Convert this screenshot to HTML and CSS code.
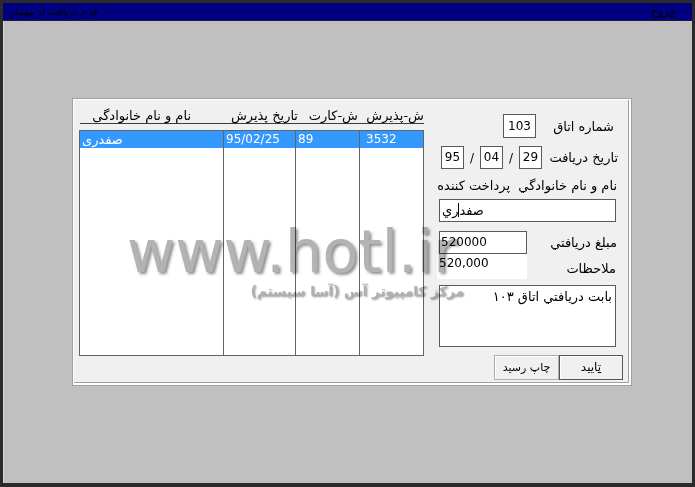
FILE: index.html
```html
<!DOCTYPE html>
<html lang="fa">
<head>
<meta charset="utf-8">
<title>فرم دریافت از مهمان</title>
<link rel="stylesheet" href="styles.css">
</head>
<body>
<div class="window">
  <div class="titlebar">
    <span class="title">فرم دریافت از مهمان</span>
    <span class="exit"><u>خ</u>روج</span>
  </div>
  <div class="client">
    <div class="panel">
      <div class="list">
        <div class="list-head">
          <span class="h h1">نام و نام خانوادگی</span>
          <span class="h h2">تاریخ پذیرش</span>
          <span class="h h3">ش-کارت</span>
          <span class="h h4">ش-پذیرش</span>
        </div>
        <div class="grid">
          <div class="col c1"><div class="cell sel">صفدری</div></div>
          <div class="col c2"><div class="cell sel">95/02/25</div></div>
          <div class="col c3"><div class="cell sel">89</div></div>
          <div class="col c4"><div class="cell sel">3532</div></div>
        </div>
      </div>
      <div class="form">
        <div class="row r-room">
          <div class="box room">103</div>
          <span class="lbl grow">شماره اتاق</span>
        </div>
        <div class="row r-date">
          <div class="box d">95</div>
          <span class="slash s1">/</span>
          <div class="box d">04</div>
          <span class="slash s2">/</span>
          <div class="box d">29</div>
          <span class="lbl grow">تاریخ دریافت</span>
        </div>
        <div class="row r-payer">
          <span class="lbl">نام و نام خانوادگي&nbsp; پرداخت کننده</span>
        </div>
        <div class="box name"><span dir="rtl">صفد<span class="caret"></span>ري</span></div>
        <div class="row r-amount">
          <div class="box amount">520000</div>
          <span class="lbl grow">مبلغ دريافتي</span>
        </div>
        <div class="row r-note">
          <div class="formatted">520,000</div>
          <span class="lbl grow note-lbl">ملاحظات</span>
        </div>
        <div class="box memo">بابت دريافتي اتاق ۱۰۳</div>
        <div class="buttons">
          <div class="btn print">چاپ رسيد</div>
          <div class="btn ok"><u>ت</u>ایید</div>
        </div>
      </div>
    </div>
    <div class="watermark">
      <div class="wm-big">www.hotl.ir</div>
      <div class="wm-small">مرکز کامپیوتر آس (آسا سیستم)</div>
    </div>
  </div>
</div>
</body>
</html>
```
FILE: styles.css
```css
* { box-sizing: border-box; }
html, body { margin: 0; padding: 0; }
body {
  background: #2b2b2b;
  width: 695px;
  height: 487px;
  overflow: hidden;
  font-family: "DejaVu Sans", "Noto Sans", sans-serif;
  font-size: 12px;
  color: #000;
}
.window {
  margin: 3px 3px 0 3px;
  width: 689px;
  height: 480px;
  display: flex;
  flex-direction: column;
}
.titlebar {
  height: 18px;
  background: #000080;
  display: flex;
  justify-content: space-between;
  align-items: center;
  padding: 0 16px 0 5px;
  color: #000;
  border-bottom: 1px solid #1a1a40;
}
.title { font-size: 10px; color: #000; }
.exit { font-size: 11px; color: #000; }
.client {
  position: relative;
  flex: 1;
  background: #c0c0c0;
  border-left: 1px solid #d4d4d4;
  padding: 77px 0 0 68px;
}
.panel {
  width: 560px;
  height: 288px;
  background: #f0f0f0;
  border: 1px solid #a0a0a0;
  box-shadow: inset 1px 1px 0 #ffffff, inset -2px -2px 0 #ffffff, inset -3px -3px 0 #a0a0a0;
  display: flex;
  padding: 0 0 0 6px;
}
.list { width: 345px; }
.list-head {
  height: 25px;
  display: flex;
  align-items: flex-end;
  border-bottom: 1px solid #3c3c3c;
  margin-left: 1px;
}
.h { text-align: right; white-space: nowrap; font-size: 13px; }
.h1 { width: 116px; padding-right: 5px; }
.h2 { width: 104px; padding-right: 2px; }
.h3 { width: 60px; padding-right: 2px; }
.h4 { width: 64px; padding-right: 0; }
.grid {
  margin-top: 6px;
  height: 226px;
  border: 1px solid #646464;
  background: #fff;
  display: grid;
  grid-template-columns: 143px 72px 64px 64px;
}
.col { border-left: 1px solid #646464; }
.c1 { border-left: none; }
.cell {
  height: 17px;
  line-height: 17px;
  white-space: nowrap;
  font-size: 12px;
}
.sel { background: #3399ff; color: #fff; }
.c1 .cell { padding-left: 2px; font-size: 13px; }
.c2 .cell { padding-left: 2px; }
.c3 .cell { padding-left: 2px; }
.c4 .cell { padding-left: 6px; }

.form {
  margin-left: 13px;
  width: 188px;
  padding-top: 15px;
  display: flex;
  flex-direction: column;
}
.row { display: flex; align-items: center; }
.lbl { white-space: nowrap; font-size: 13px; }
.grow { flex: 1; text-align: right; }
.box {
  background: #fff;
  border: 1px solid #5a5a5a;
  font-size: 12px;
}
.r-room { height: 24px; padding-left: 66px; padding-right: 11px; }
.room { width: 33px; height: 24px; line-height: 22px; text-align: center; }
.r-date { height: 23px; margin-top: 8px; padding-left: 4px; padding-right: 7px; }
.d { width: 23px; height: 23px; line-height: 21px; text-align: center; }
.slash { width: 16px; text-align: center; }
.s2 { width: 16px; }
.r-payer { height: 16px; margin-top: 8px; justify-content: flex-end; padding-right: 8px; }
.name {
  margin-top: 6px;
  margin-left: 2px;
  width: 177px;
  height: 23px;
  line-height: 21px;
  text-align: left;
  padding-left: 2px;
  font-size: 13px;
}
.caret {
  display: inline-block;
  width: 1px;
  height: 14px;
  background: #000;
  vertical-align: -2px;
}
.r-amount { margin-top: 9px; height: 23px; padding-left: 2px; padding-right: 8px; }
.amount { width: 88px; height: 23px; line-height: 21px; padding-left: 1px; }
.r-note { height: 25px; align-items: flex-start; padding-right: 9px; }
.formatted {
  width: 90px;
  height: 25px;
  background: #fff;
  padding-left: 2px;
  line-height: 18px;
}
.note-lbl { padding-top: 7px; }
.memo {
  margin-top: 6px;
  margin-left: 2px;
  width: 177px;
  height: 62px;
  text-align: right;
  padding: 3px 3px 0 0;
  font-size: 13px;
  direction: rtl;
}
.buttons { display: flex; margin-top: 8px; margin-left: 57px; }
.btn {
  height: 25px;
  line-height: 23px;
  text-align: center;
  background: #f0f0f0;
  border: 1px solid #adadad;
  box-shadow: inset 1px 1px 0 #fff;
  font-size: 11px;
}
.print { width: 65px; }
.ok { width: 64px; border-color: #555; font-size: 12px; }

.watermark {
  position: absolute;
  left: 0;
  top: 0;
  pointer-events: none;
  mix-blend-mode: multiply;
}
.wm-big {
  position: absolute;
  left: 123px;
  top: 201px;
  font-size: 59px;
  line-height: 60px;
  white-space: nowrap;
  color: #b3b3b3;
  text-shadow: 2px 2px 3px rgba(0, 0, 0, 0.45);
}
.wm-small {
  position: absolute;
  left: 247px;
  top: 262px;
  width: 213px;
  direction: rtl;
  text-align: right;
  font-size: 13.5px;
  font-weight: bold;
  white-space: nowrap;
  color: #b0b0b0;
  text-shadow: 1px 1px 2px rgba(0, 0, 0, 0.4);
}
```
